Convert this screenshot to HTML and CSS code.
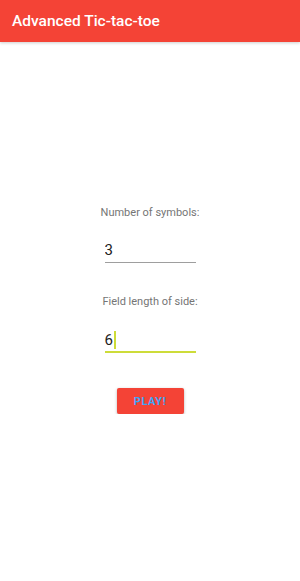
FILE: index.html
```html
<!DOCTYPE html>
<html lang="en">
<head>
    <meta charset="UTF-8">
    <meta name="viewport" content="width=device-width, initial-scale=1.0">
    <title>Advanced Tic-tac-toe</title>
    <link rel="stylesheet" href="styles.css">
</head>
<body>
    <header class="toolbar">Advanced Tic-tac-toe</header>
    <main class="content">
        <label class="field-label" for="symbols">Number of symbols:</label>
        <div class="field">
            <input type="text" id="symbols" value="3">
        </div>
        <label class="field-label" for="side">Field length of side:</label>
        <div class="field focused">
            <span class="value">6</span><span class="cursor"></span>
        </div>
        <button class="play">PLAY!</button>
    </main>
</body>
</html>
```

FILE: styles.css
```css
body {
    margin: 0;
    font-family: Roboto, "Noto Sans", sans-serif;
    background: #fff;
}
.toolbar {
    height: 42px;
    background-color: #f44336;
    color: #fff;
    font-size: 15.5px;
    font-weight: 500;
    line-height: 42px;
    padding-left: 12px;
    box-shadow: 0 1px 3px rgba(0, 0, 0, 0.2);
}
.content {
    display: flex;
    flex-direction: column;
    align-items: center;
    padding-top: 164px;
}
.field-label {
    font-size: 11px;
    color: #757575;
    line-height: 14px;
}
.field {
    width: 91px;
    margin-top: 18px;
    margin-bottom: 32px;
    height: 24px;
    border-bottom: 1px solid #9e9e9e;
    display: flex;
    align-items: center;
}
.field input {
    border: none;
    outline: none;
    padding: 0;
    width: 100%;
    font-family: Roboto, sans-serif;
    font-size: 15px;
    color: #212121;
    background: transparent;
}
.field.focused {
    border-bottom: 2px solid #cddc39;
    height: 23px;
    margin-top: 19px;
    margin-bottom: 35px;
}
.value {
    font-size: 15px;
    color: #212121;
}
.cursor {
    display: inline-block;
    width: 2px;
    height: 18px;
    background: #cddc39;
    margin-left: 1px;
}
.play {
    width: 67px;
    height: 26px;
    border: none;
    border-radius: 2px;
    background-color: #f44336;
    color: #42a5f5;
    font-family: Roboto, sans-serif;
    font-weight: 700;
    font-size: 11px;
    letter-spacing: 0.6px;
    box-shadow: 0 1px 3px rgba(0, 0, 0, 0.3);
    padding: 0;
}
```
